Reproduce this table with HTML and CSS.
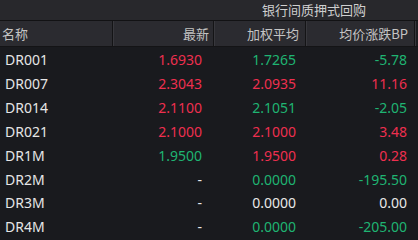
FILE: index.html
```html
<!DOCTYPE html>
<html lang="zh">
<head>
<meta charset="utf-8">
<link rel="stylesheet" href="styles.css">
</head>
<body>
<div class="panel">
  <div class="titlebar">
    <div class="title">银行间质押式回购</div>
  </div>
  <div class="head">
    <div class="hc left">名称</div>
    <div class="hc c2">最新</div>
    <div class="hc c3">加权平均</div>
    <div class="hc c4">均价涨跌BP</div>
    <div class="hc tail"></div>
  </div>
  <div class="rows">
    <div class="row"><span class="name">DR001</span><span class="v2 red">1.6930</span><span class="v3 green">1.7265</span><span class="v4 green">-5.78</span></div>
    <div class="row"><span class="name">DR007</span><span class="v2 red">2.3043</span><span class="v3 red">2.0935</span><span class="v4 red">11.16</span></div>
    <div class="row"><span class="name">DR014</span><span class="v2 red">2.1100</span><span class="v3 green">2.1051</span><span class="v4 green">-2.05</span></div>
    <div class="row"><span class="name">DR021</span><span class="v2 red">2.1000</span><span class="v3 red">2.1000</span><span class="v4 red">3.48</span></div>
    <div class="row"><span class="name">DR1M</span><span class="v2 green">1.9500</span><span class="v3 red">1.9500</span><span class="v4 red">0.28</span></div>
    <div class="row"><span class="name">DR2M</span><span class="v2 white">-</span><span class="v3 green">0.0000</span><span class="v4 green">-195.50</span></div>
    <div class="row"><span class="name">DR3M</span><span class="v2 white">-</span><span class="v3 white">0.0000</span><span class="v4 white">0.00</span></div>
    <div class="row"><span class="name">DR4M</span><span class="v2 white">-</span><span class="v3 green">0.0000</span><span class="v4 green">-205.00</span></div>
  </div>
</div>
</body>
</html>
```

FILE: styles.css
```css
html, body {
  margin: 0;
  padding: 0;
  background: #191a1e;
}
.panel {
  width: 418px;
  height: 240px;
  overflow: hidden;
  font-family: "Noto Sans", "Noto Sans CJK SC", sans-serif;
  color: #e4e4e4;
  background: #191a1e;
}
.titlebar {
  height: 20px;
  background: #28282c;
  border-bottom: 1px solid #121214;
  display: grid;
  grid-template-columns: 214px 200px 4px;
}
.title {
  grid-column: 2;
  text-align: center;
  font-family: "Noto Sans CJK SC", sans-serif;
  font-size: 13px;
  line-height: 20px;
  color: #cfcfcf;
}
.head {
  display: grid;
  grid-template-columns: 112px 100px 91px 108px 4px;
  column-gap: 1px;
  background: #141416;
  height: 25px;
  border-bottom: 1px solid #141416;
}
.hc {
  background: #2b2b30;
  font-family: "Noto Sans CJK SC", sans-serif;
  font-size: 13px;
  line-height: 25px;
  color: #c4c4c4;
  text-align: right;
  box-shadow: inset 1px 0 0 #38383d;
}
.hc.left {
  text-align: left;
  padding-left: 2px;
  box-shadow: none;
}
.hc.c2 { padding-right: 4px; }
.hc.c3 { padding-right: 6px; }
.hc.c4 { padding-right: 6px; }
.hc.tail { background: #1d1d21; }
.rows {
  padding-top: 1px;
}
.row {
  display: grid;
  grid-template-columns: 113px 89px 94px 111px;
  height: 23.85px;
  align-items: center;
  font-size: 14px;
}
.name {
  padding-left: 5px;
  color: #e6e6e6;
}
.v2, .v3, .v4 {
  text-align: right;
}
.red { color: #ee2f4f; }
.green { color: #1fb472; }
.white { color: #e8e8e8; }
```
